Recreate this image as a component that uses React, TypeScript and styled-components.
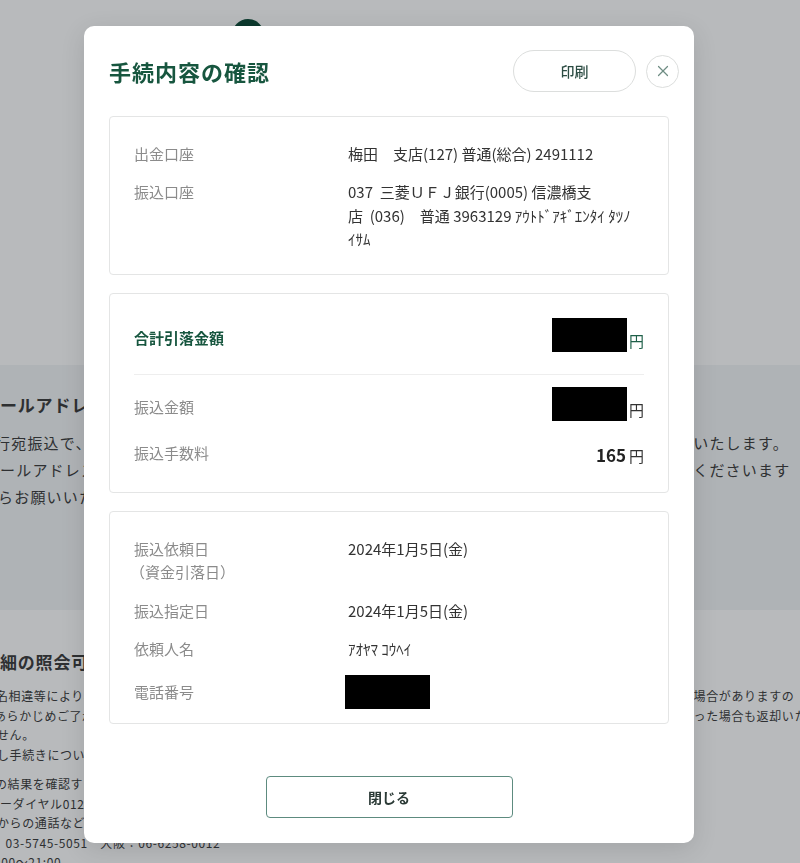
import React from 'react';
import styled, { createGlobalStyle } from 'styled-components';
import { X } from 'lucide-react';

const FONT = '"Noto Sans CJK JP", "Noto Sans", sans-serif';

const GlobalStyle = createGlobalStyle`
  html, body {
    margin: 0;
    padding: 0;
    background: #ffffff;
    font-family: ${FONT};
    color: #333;
  }
  * {
    box-sizing: border-box;
  }
`;

interface BgRow {
  left: string;
  right?: string;
  shift?: number;
}

const noticeRows: BgRow[] = [
  { left: '行宛振込で、', right: 'おいたします。', shift: -5 },
  { left: 'ールアドレス', right: 'をくださいます' },
  { left: 'らお願いいた', shift: -2 },
];

const infoRows1: BgRow[] = [
  { left: '名相違等により、', right: 'る場合がありますの', shift: -4 },
  { left: 'あらかじめご了承', right: 'あった場合も返却いた', shift: -6 },
  { left: 'せん。', shift: -3 },
  { left: 'し手続きについ', shift: -3 },
];

const infoRows2: BgRow[] = [
  { left: 'の結果を確認す', shift: -5 },
  { left: 'ーダイヤル0120' },
  { left: 'からの通話など', shift: -3 },
  { left: '　03-5745-5051　大阪：06-6258-0012', shift: -7 },
  { left: '9:00～21:00', shift: -10 },
];

const App: React.FC = () => {
  return (
    <>
      <GlobalStyle />
      <Page>
        <TopArea>
          <StepCircle />
        </TopArea>

        <NoticeSection>
          <BgHeading>ールアドレ</BgHeading>
          {noticeRows.map((row, i) => (
            <BgLine key={i} $size={15} $height={27} $spacing={1.2}>
              <BgLeft $shift={row.shift || 0}>{row.left}</BgLeft>
              {row.right && <BgRight $start={677}>{row.right}</BgRight>}
            </BgLine>
          ))}
        </NoticeSection>

        <InfoSection>
          <BgHeading>細の照会可</BgHeading>
          <BgParagraph>
            {infoRows1.map((row, i) => (
              <BgLine key={i} $size={12} $height={19.5} $spacing={0.6}>
                <BgLeft $shift={row.shift || 0}>{row.left}</BgLeft>
                {row.right && <BgRight $start={681}>{row.right}</BgRight>}
              </BgLine>
            ))}
          </BgParagraph>
          <BgParagraph>
            {infoRows2.map((row, i) => (
              <BgLine key={i} $size={12} $height={19.5} $spacing={0.6}>
                <BgLeft $shift={row.shift || 0}>{row.left}</BgLeft>
              </BgLine>
            ))}
          </BgParagraph>
        </InfoSection>
      </Page>

      <Overlay>
        <Modal>
          <Header>
            <Title>手続内容の確認</Title>
            <HeaderActions>
              <PrintButton>印刷</PrintButton>
              <CloseIconButton aria-label="閉じる">
                <X size={18} strokeWidth={1.6} color="#6f8d84" />
              </CloseIconButton>
            </HeaderActions>
          </Header>

          <Card $padding="25px 24px 24px">
            <DetailList>
              <DetailRow>
                <Label>出金口座</Label>
                <Value>梅田　支店(127) 普通(総合) 2491112</Value>
              </DetailRow>
              <DetailRow>
                <Label>振込口座</Label>
                <Value>
                  037&nbsp; 三菱ＵＦＪ銀行(0005) 信濃橋支
                  <br />
                  店&nbsp; (036)　普通 3963129 ｱｳﾄﾄﾞｱｷﾞｴﾝﾀｲ ﾀﾂﾉ
                  <br />
                  ｲｻﾑ
                </Value>
              </DetailRow>
            </DetailList>
          </Card>

          <Card $padding="24px 24px 25px">
            <AmountRow>
              <AmountLabel $strong>合計引落金額</AmountLabel>
              <AmountValue>
                <Redacted $width={75} />
                <Yen $green>円</Yen>
              </AmountValue>
            </AmountRow>
            <Divider />
            <AmountRow>
              <AmountLabel>振込金額</AmountLabel>
              <AmountValue>
                <Redacted $width={75} />
                <Yen>円</Yen>
              </AmountValue>
            </AmountRow>
            <AmountRow $gap={20}>
              <AmountLabel>振込手数料</AmountLabel>
              <AmountValue>
                <Fee>165</Fee>
                <Yen>円</Yen>
              </AmountValue>
            </AmountRow>
          </Card>

          <Card $padding="25px 24px 14px">
            <DetailList>
              <DetailRow>
                <Label>
                  振込依頼日
                  <br />
                  <SubLabel>（資金引落日）</SubLabel>
                </Label>
                <Value>2024年1月5日(金)</Value>
              </DetailRow>
              <DetailRow>
                <Label>振込指定日</Label>
                <Value>2024年1月5日(金)</Value>
              </DetailRow>
              <DetailRow>
                <Label>依頼人名</Label>
                <Value>ｱｵﾔﾏ ｺｳﾍｲ</Value>
              </DetailRow>
              <DetailRow $center>
                <Label>電話番号</Label>
                <Value>
                  <Redacted $width={85} $offset={-3} />
                </Value>
              </DetailRow>
            </DetailList>
          </Card>

          <Footer>
            <CloseButton>閉じる</CloseButton>
          </Footer>
        </Modal>
      </Overlay>
    </>
  );
};

/* ---------- page behind the dialog ---------- */

const Page = styled.div`
  width: 800px;
  height: 863px;
  overflow: hidden;
  background: #ffffff;
  color: #3a3a3a;
`;

const TopArea = styled.div`
  height: 365px;
  padding-top: 19px;
`;

const StepCircle = styled.div`
  width: 32px;
  height: 32px;
  margin-left: 232px;
  border-radius: 50%;
  background: #094834;
`;

const NoticeSection = styled.section`
  height: 245px;
  padding-top: 27px;
  background: #f3f5f6;
`;

const InfoSection = styled.section`
  padding-top: 39px;
`;

const BgHeading = styled.h2`
  margin: 0 0 11px;
  height: 26px;
  font-size: 17px;
  line-height: 26px;
  font-weight: 700;
  letter-spacing: 0.8px;
  white-space: nowrap;
  overflow: hidden;
`;

const BgParagraph = styled.div`
  & + & {
    margin-top: 10px;
  }
`;

const BgLine = styled.div<{ $size: number; $height: number; $spacing: number }>`
  display: flex;
  font-size: ${p => p.$size}px;
  line-height: ${p => p.$height}px;
  letter-spacing: ${p => p.$spacing}px;
  white-space: nowrap;
`;

const BgLeft = styled.div<{ $shift: number }>`
  flex: 1;
  overflow: hidden;
  text-indent: ${p => p.$shift}px;
`;

const BgRight = styled.div<{ $start: number }>`
  flex: none;
  width: ${p => 800 - p.$start}px;
  overflow: hidden;
`;

/* ---------- dialog ---------- */

const Overlay = styled.div`
  position: fixed;
  inset: 0;
  display: flex;
  align-items: flex-start;
  padding: 26px 0 0 84px;
  background: rgba(20, 28, 32, 0.3);
`;

const Modal = styled.div`
  width: 610px;
  padding: 24px 25px 25px;
  background: #ffffff;
  border-radius: 10px;
  box-shadow: 0 6px 24px rgba(0, 0, 0, 0.12);
  display: flex;
  flex-direction: column;
  gap: 18px;
`;

const Header = styled.div`
  display: flex;
  align-items: center;
  justify-content: space-between;
  height: 42px;
  margin-right: -10px;
  margin-bottom: 6px;
`;

const Title = styled.h1`
  margin: 0;
  font-size: 22px;
  font-weight: 700;
  letter-spacing: 1px;
  color: #17563f;
`;

const HeaderActions = styled.div`
  display: flex;
  align-items: center;
  gap: 10px;
`;

const PrintButton = styled.button`
  width: 123px;
  height: 42px;
  border: 1px solid #dcdedd;
  border-radius: 21px;
  background: #ffffff;
  font-family: ${FONT};
  font-size: 14px;
  font-weight: 500;
  color: #2c4c43;
  cursor: pointer;
`;

const CloseIconButton = styled.button`
  width: 33px;
  height: 33px;
  padding: 0;
  border: 1px solid #dcdedd;
  border-radius: 50%;
  background: #ffffff;
  display: flex;
  align-items: center;
  justify-content: center;
  cursor: pointer;
`;

const Card = styled.div<{ $padding: string }>`
  border: 1px solid #e4e5e5;
  border-radius: 4px;
  padding: ${p => p.$padding};
`;

const DetailList = styled.div`
  display: flex;
  flex-direction: column;
  gap: 15px;
`;

const DetailRow = styled.div<{ $center?: boolean }>`
  display: grid;
  grid-template-columns: 214px 1fr;
  align-items: ${p => (p.$center ? 'center' : 'start')};
  font-size: 15px;
  line-height: 23.25px;
`;

const Label = styled.div`
  color: #8b8b8b;
`;

const SubLabel = styled.span`
  display: inline-block;
  margin-left: -4px;
`;

const Value = styled.div`
  color: #333333;
`;

const AmountRow = styled.div<{ $gap?: number }>`
  display: flex;
  align-items: flex-end;
  justify-content: space-between;
  margin-top: ${p => p.$gap || 0}px;
`;

const AmountLabel = styled.div<{ $strong?: boolean }>`
  font-size: 15px;
  line-height: 24px;
  font-weight: ${p => (p.$strong ? 700 : 400)};
  color: ${p => (p.$strong ? '#17563f' : '#8b8b8b')};
  margin-bottom: 2px;
`;

const AmountValue = styled.div`
  display: flex;
  align-items: flex-end;
  gap: 2px;
`;

const Redacted = styled.div<{ $width: number; $offset?: number }>`
  width: ${p => p.$width}px;
  height: 34px;
  background: #000000;
  margin-left: ${p => p.$offset || 0}px;
`;

const Yen = styled.span<{ $green?: boolean }>`
  font-size: 15px;
  line-height: 22px;
  color: ${p => (p.$green ? '#1f6049' : '#333333')};
`;

const Fee = styled.span`
  font-size: 17px;
  line-height: 24px;
  font-weight: 700;
  color: #222222;
  margin-right: 1px;
`;

const Divider = styled.hr`
  margin: 22px 0 12px;
  border: none;
  border-top: 1px solid #eeeeee;
`;

const Footer = styled.div`
  display: flex;
  justify-content: center;
  padding-top: 34px;
`;

const CloseButton = styled.button`
  width: 247px;
  height: 42px;
  border: 1.5px solid #5d8b7f;
  border-radius: 4px;
  background: #ffffff;
  font-family: ${FONT};
  font-size: 14px;
  font-weight: 700;
  color: #2b3a36;
  cursor: pointer;
`;

export default App;
